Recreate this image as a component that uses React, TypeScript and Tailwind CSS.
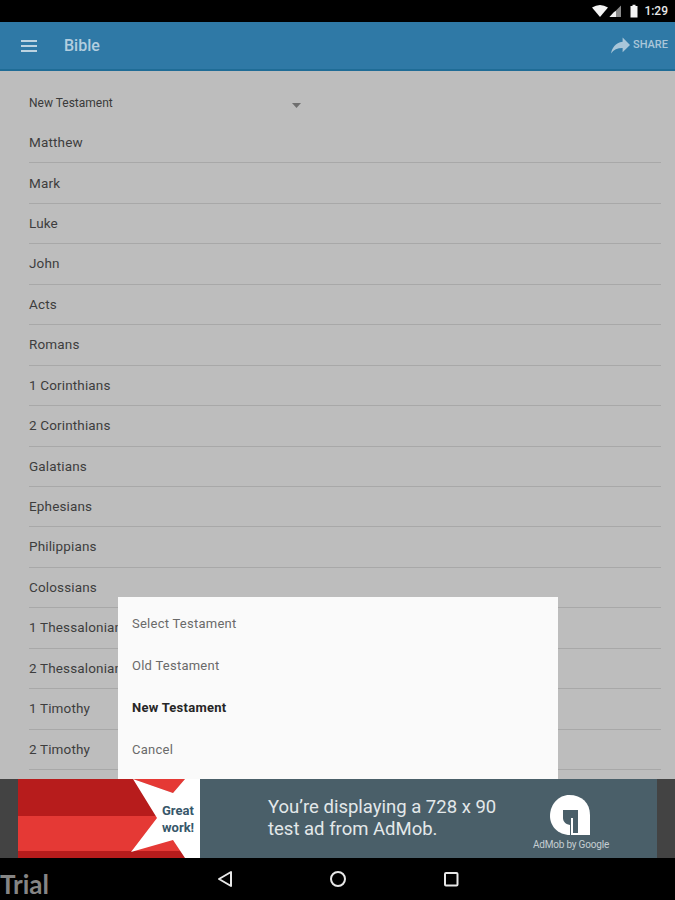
const books = ["Matthew","Mark","Luke","John","Acts","Romans","1 Corinthians","2 Corinthians","Galatians","Ephesians","Philippians","Colossians","1 Thessalonians","2 Thessalonians","1 Timothy","2 Timothy"];

function StatusBar() {
  return (
    <div className="h-[22px] bg-black flex items-center justify-end pr-[7px] shrink-0">
      <svg width="46" height="14" viewBox="0 0 46 14" className="mr-[6px]">
        <path d="M0 3.5 Q8 -1.5 16 3.5 L8 13 Z" fill="#f4f4f4" />
        <path d="M29 1.5 V13 H17.5 Z" fill="#8a8a8a" />
        <path d="M24 7 V13 H17.5 L22 8 Z" fill="#f0f0f0" />
        <path d="M38.5 2 H40.5 V0.8 H43.5 V2 H45.5 V13.5 H38.5 Z" fill="#f4f4f4" />
      </svg>
      <span className="text-[12px] font-medium text-[#e8e8e8] font-['Roboto',sans-serif]">1:29</span>
    </div>
  );
}

function AppBar() {
  return (
    <div className="h-[49px] bg-[#2f79a6] border-b-2 border-[#1f6c96] flex items-center shrink-0 font-['Roboto',sans-serif]">
      <div className="ml-[21px] w-[16px] flex flex-col gap-[3px]">
        <div className="h-[2px] bg-[#bcd3e1]" />
        <div className="h-[2px] bg-[#bcd3e1]" />
        <div className="h-[2px] bg-[#bcd3e1]" />
      </div>
      <span className="ml-[27px] text-[16px] font-medium text-[#b3cedf]">Bible</span>
      <div className="ml-auto mr-[7px] flex items-center gap-[3px]">
        <svg width="19" height="19" viewBox="3 4 18 17"><path d="M14 9V5l7 7-7 7v-4.1c-5 0-8.5 1.6-11 5.1 1-5 4-10 11-11z" fill="#a9c6d9" /></svg>
        <span className="text-[11px] font-medium text-[#a9c6d9]">SHARE</span>
      </div>
    </div>
  );
}

function Ad() {
  return (
    <div className="h-[79px] bg-[#434343] px-[18px] flex shrink-0 font-['Roboto',sans-serif]">
      <div className="relative w-[182px] flex flex-col shrink-0">
        <div className="h-[37px] bg-[#b71c1c]" />
        <div className="h-[35px] bg-[#e53935]" />
        <div className="flex-1 bg-[#b71c1c]" />
        <svg className="absolute left-0 top-0" width="240" height="79" viewBox="0 0 240 79">
          <path d="M115 0 L167 0 L155 14 Z" fill="#e53935" />
          <path d="M182 24 L224 40 L182 53 Z" fill="#1f2d33" opacity="0.45" transform="translate(1 2)" />
          <path d="M115 0 L155 14 L167 0 L182 0 L182 24 L224 40 L182 53 L182 79 L167 79 L155 61 L113 73 L139 39 Z" fill="#ffffff" />
        </svg>
        <div className="absolute left-[144px] top-[23px] text-[13px] leading-[17px] font-bold text-[#37576a]">
          <div>Great</div>
          <div>work!</div>
        </div>
      </div>
      <div className="relative flex-1 bg-[#4a5f69] flex items-center">
        <div className="ml-[68px] mt-[-1px] text-[18.5px] leading-[22.5px] text-[#e3e8ea]">
          <div>You’re displaying a 728 x 90</div>
          <div>test ad from AdMob.</div>
        </div>
        <div className="ml-auto mr-[48px] flex flex-col items-center">
          <svg width="41" height="43" viewBox="0 0 41 43" className="mt-[8px]">
            <path d="M19 0 C32 0 40 8 40 20 V40 H20 C8 40 0 31 0 21 C0 9 9 0 19 0 Z" fill="#ffffff" />
            <path d="M21 15 C15 15 13 19 13 23 C13 26 15 29 20 30 V40 H21 Z" fill="#4a5f69" />
            <path d="M21 15 H29 V40 H21 Z" fill="#4a5f69" opacity="0" />
            <path d="M28 15 H30 V40 H28 Z" fill="#4a5f69" opacity="0" />
            <path d="M13 15 H28 V38 H23 V23 H13 Z" fill="#4a5f69" />
          </svg>
          <span className="text-[10px] leading-[12px] mt-[1px] text-[#c5ced2] tracking-[-0.2px] whitespace-nowrap">AdMob by Google</span>
        </div>
      </div>
    </div>
  );
}

function NavBar() {
  return (
    <div className="relative h-[42px] bg-black flex items-center justify-center gap-[85px] shrink-0 pb-[1px] pl-[1px]">
      <svg width="28" height="20" viewBox="0 0 28 20"><path d="M20 3 V17 L8 10 Z" fill="none" stroke="#e8e8e8" strokeWidth="2" strokeLinejoin="round" /></svg>
      <svg width="28" height="20" viewBox="0 0 28 20"><circle cx="14" cy="10" r="7" fill="none" stroke="#e8e8e8" strokeWidth="2" /></svg>
      <svg width="28" height="20" viewBox="0 0 28 20"><rect x="8" y="4" width="12.5" height="12.5" rx="1" fill="none" stroke="#e8e8e8" strokeWidth="2" /></svg>
      <span className="absolute left-0 top-[11px] text-[26px] leading-[30px] font-bold text-[#858585] font-['Lato',sans-serif]">Trial</span>
    </div>
  );
}

export default function App() {
  return (
    <div className="w-[675px] h-[900px] flex flex-col overflow-hidden bg-[#bdbdbd]">
      <StatusBar />
      <AppBar />
      <div className="relative flex-1 overflow-hidden px-[29px] font-['Roboto',sans-serif]">
        <div className="w-[272px] h-[52px] pt-[24px] flex items-start justify-between">
          <span className="text-[12px] leading-[16px] text-[#3a3a3a]">New Testament</span>
          <svg width="9" height="5" viewBox="0 0 9 5" className="mt-[8px]"><path d="M0 0 H9 L4.5 5 Z" fill="#6f6f6f" /></svg>
        </div>
        {books.map((b) => (
          <div key={b} className="h-[40.45px] border-b border-[#a8a8a8] flex items-center pb-[1px] mr-[-15px] text-[13.5px] text-[#3d3d3d] tracking-[0.15px]">{b}</div>
        ))}
        <div className="absolute left-[118px] bottom-0 w-[440px] h-[182px] bg-[#fafafa] flex flex-col pt-[6px] pl-[14px] text-[13px] tracking-[0.25px] text-[#6a6a6a]">
          <div className="h-[42px] flex items-center">Select Testament</div>
          <div className="h-[42px] flex items-center">Old Testament</div>
          <div className="h-[42px] flex items-center font-bold text-[#262626]">New Testament</div>
          <div className="h-[42px] flex items-center">Cancel</div>
        </div>
      </div>
      <Ad />
      <NavBar />
    </div>
  );
}
